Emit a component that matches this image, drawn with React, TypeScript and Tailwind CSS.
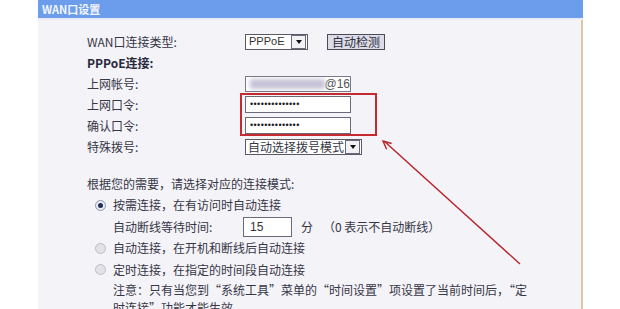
import React from "react";

const Radio = ({ checked }: { checked?: boolean }) =>
  checked ? (
    <span className="w-[11px] h-[11px] rounded-full border border-[#8f97a8] bg-[#e8ebf2] flex items-center justify-center shrink-0">
      <span className="w-[5px] h-[5px] rounded-full bg-[#1f2f55]" />
    </span>
  ) : (
    <span className="w-[11px] h-[11px] rounded-full border border-[#bdbdc6] bg-[#e2e2e8] shrink-0" />
  );

const Arrow = () => (
  <span className="w-[15px] h-[14px] border border-[#6a6a78] bg-[#f2f2f6] flex items-center justify-center shrink-0">
    <span className="w-0 h-0 border-l-[3px] border-r-[3px] border-t-[4px] border-l-transparent border-r-transparent border-t-[#111]" />
  </span>
);

const Dots = () => (
  <span className="font-['Liberation_Sans',sans-serif] text-[9px] text-[#1a1a22] tracking-[0.4px]">
    ••••••••••••••
  </span>
);

export default function App() {
  const label = "w-[158px] shrink-0";
  return (
    <div className="relative w-[620px] h-[309px] overflow-hidden bg-white text-[12px] text-[#363646] font-['Noto_Sans_CJK_SC','Noto_Sans',sans-serif]">
      <div className="ml-[38px] w-[545px] h-full flex flex-col">
        <div className="h-[20px] shrink-0 bg-[#6c9ded] border-b-2 border-[#e9ecf7] flex items-center pl-[4px]">
          <span className="text-[11px] font-bold text-[#f3f6ff] leading-none">WAN口设置</span>
        </div>
        <div className="flex-1 bg-[#f4f3f8] border-r-2 border-[#d8c7a3] pl-[49px] pt-[11px] leading-none">
          <div className="h-[21px] flex items-center">
            <span className={label}>WAN口连接类型:</span>
            <div className="w-[63px] h-[16px] border border-[#5a5a66] bg-white flex items-center justify-between pl-[3px] pr-[1px]">
              <span className="font-['Liberation_Sans',sans-serif] text-[11px] text-[#333]">PPPoE</span>
              <Arrow />
            </div>
            <div className="ml-[19px] w-[58px] h-[16px] border border-[#4a4a58] bg-[#dcdce8] flex items-center justify-center text-[#2e2e3c]">
              自动检测
            </div>
          </div>
          <div className="h-[21px] flex items-center">
            <span className={label + " font-bold text-[#2a2a3c]"}>PPPoE连接:</span>
          </div>
          <div className="h-[21px] flex items-center">
            <span className={label}>上网帐号:</span>
            <div className="w-[106px] h-[16px] border border-[#7a7a86] bg-white flex items-center overflow-hidden">
              <span className="ml-[4px] w-[82px] h-[10px] bg-[#c5c3d6] blur-[2px]" />
              <span className="font-['Liberation_Sans',sans-serif] text-[12px] text-[#555] -ml-[1px]">@16</span>
            </div>
          </div>
          <div className="h-[21px] flex items-center">
            <span className={label}>上网口令:</span>
            <div className="w-[106px] h-[17px] border border-[#6a6a78] bg-white flex items-center pl-[4px]">
              <Dots />
            </div>
          </div>
          <div className="h-[21px] flex items-center">
            <span className={label}>确认口令:</span>
            <div className="w-[106px] h-[17px] border border-[#6a6a78] bg-white flex items-center pl-[4px]">
              <Dots />
            </div>
          </div>
          <div className="h-[21px] flex items-center">
            <span className={label}>特殊拨号:</span>
            <div className="w-[117px] h-[16px] border border-[#5a5a66] bg-white flex items-center justify-between pl-[2px] pr-[1px]">
              <span>自动选择拨号模式</span>
              <Arrow />
            </div>
          </div>

          <div className="mt-[16px] h-[21px] flex items-center">根据您的需要，请选择对应的连接模式:</div>
          <div className="h-[22px] flex items-center pl-[8px] gap-[7px]">
            <Radio checked />
            <span>按需连接，在有访问时自动连接</span>
          </div>
          <div className="h-[21px] flex items-center pl-[26px]">
            <span className="w-[130px] shrink-0">自动断线等待时间:</span>
            <div className="w-[49px] h-[20px] border border-[#6a6a78] bg-white flex items-center pl-[6px] font-['Liberation_Sans',sans-serif] text-[12px] text-[#333]">
              15
            </div>
            <span className="ml-[9px]">分</span>
            <span className="ml-[10px]">（0 表示不自动断线）</span>
          </div>
          <div className="h-[22px] flex items-center pl-[8px] gap-[7px]">
            <Radio />
            <span>自动连接，在开机和断线后自动连接</span>
          </div>
          <div className="h-[21px] flex items-center pl-[8px] gap-[7px]">
            <Radio />
            <span>定时连接，在指定的时间段自动连接</span>
          </div>
          <div className="pl-[26px] leading-[18px] pt-[1px]">
            <div className="whitespace-nowrap">注意：只有当您到“系统工具”菜单的“时间设置”项设置了当前时间后，“定</div>
            <div className="whitespace-nowrap">时连接”功能才能生效。</div>
          </div>
        </div>
      </div>

      <div className="absolute left-[240px] top-[93px] w-[137px] h-[43px] border-2 border-[#c42a2f]" />
      <svg className="absolute left-0 top-0" width="620" height="309" viewBox="0 0 620 309">
        <line x1="520" y1="264" x2="384" y2="141" stroke="#b8232a" strokeWidth="1.4" />
        <polyline points="386.6,149.3 383,141 391.6,143.5" fill="none" stroke="#b8232a" strokeWidth="1.4" />
      </svg>
    </div>
  );
}
